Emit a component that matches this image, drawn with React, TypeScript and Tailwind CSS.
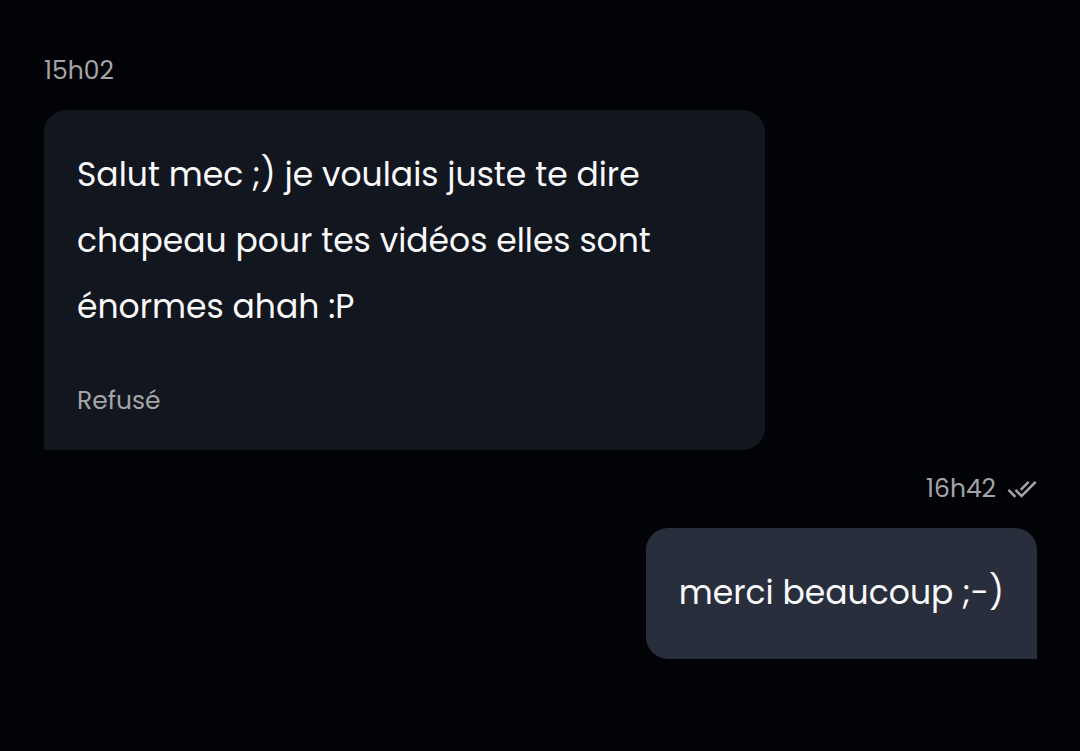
import { useId } from 'react';

type Message = {
  time: string;
  text: string;
  mine?: boolean;
  status?: string;
};

const MESSAGES: Message[] = [
  {
    time: '15h02',
    text: 'Salut mec ;) je voulais juste te dire chapeau pour tes vidéos elles sont énormes ahah :P',
    status: 'Refusé',
  },
  { time: '16h42', text: 'merci beaucoup ;-)', mine: true },
];

const DoubleCheck = () => (
  <svg viewBox="0 0 24 24" className="w-[30px] h-[30px]" fill="currentColor" role="img" aria-label="Lu">
    <path d="M18 7l-1.41-1.41-6.34 6.34 1.41 1.41L18 7zm4.24-1.41L11.66 16.17 7.48 12l-1.41 1.41L11.66 19l12-12-1.42-1.41zM.41 13.41L6 19l1.41-1.41L1.83 12 .41 13.41z" />
  </svg>
);

const MessageItem = ({ time, text, mine, status }: Message) => {
  const id = useId();

  return (
    <li className={`flex flex-col ${mine ? 'items-end' : 'items-start'}`}>
      <div id={id} className="flex items-center gap-[11px] h-[78px] text-[25px] leading-8 text-[#a5a5a8]">
        <time>{time}</time>
        {mine && <DoubleCheck />}
      </div>
      <article
        aria-labelledby={id}
        className={`px-[33px] pt-8 pb-[33px] rounded-[22px] text-[#f9f9fb] ${
          mine ? 'bg-[#282e3b] rounded-br-none' : 'max-w-[721px] bg-[#12161e] rounded-bl-none'
        }`}
      >
        <p className="text-[33px] leading-[66px]">{text}</p>
        {status && <p className="mt-[45px] text-[25px] leading-8 text-[#a5a5a8]">{status}</p>}
      </article>
    </li>
  );
};

export default function App() {
  return (
    <main className="min-h-screen bg-[#020306] pl-[44px] pr-[43px] py-8 font-['Poppins','Open_Sans',sans-serif]">
      <ul>
        {MESSAGES.map((m) => (
          <MessageItem key={m.time} {...m} />
        ))}
      </ul>
    </main>
  );
}
